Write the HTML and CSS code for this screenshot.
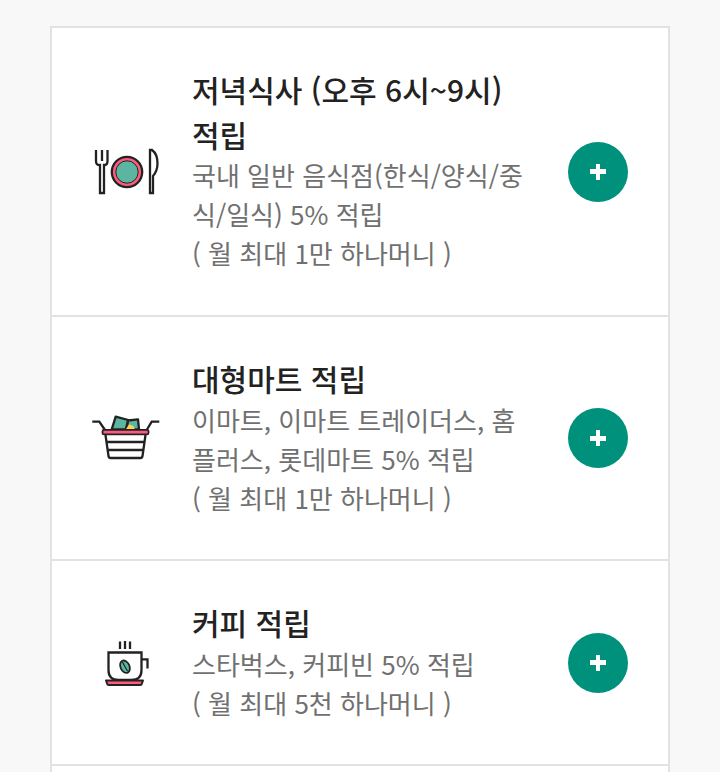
FILE: index.html
```html
<!DOCTYPE html>
<html lang="ko">
<head>
<meta charset="utf-8">
<title>적립</title>
<link rel="stylesheet" href="styles.css">
</head>
<body>
<ul class="card">
  <li class="row">
    <svg class="icon" viewBox="0 0 80 60" width="80" height="60">
      <g fill="none" stroke="#222" stroke-width="2.3">
        <path d="M9 8V19Q9 23 12 23H13V51H17V23H18Q20.5 23 20.5 19V8M15 8V19"/>
        <circle cx="40" cy="30" r="15.2" fill="#ff5a7d"/>
        <circle cx="40" cy="30" r="11.2" fill="#5cb5a0" stroke="#222" stroke-width="1"/>
        <path d="M63 8V51H66V34Q70.5 29 70.5 21Q70.5 12 65 8Z"/>
      </g>
    </svg>
    <div class="body">
      <h3 class="title">저녁식사 (오후 6시~9시) 적립</h3>
      <p class="desc">국내 일반 음식점(한식/양식/중식/일식) 5% 적립<br>( 월 최대 1만 하나머니 )</p>
    </div>
    <button class="add" type="button" aria-label="추가"><span class="plus"></span></button>
  </li>
  <li class="row">
    <svg class="icon" viewBox="0 0 80 60" width="80" height="60">
      <path d="M24.7 21.3L28.7 8.7L41.3 12L38.7 21.3Z" fill="#5cb5a0" stroke="#222" stroke-width="2.3" stroke-linejoin="round"/>
      <path d="M41 12.5L51 11.3L52 21.3H40Z" fill="#5cb5a0" stroke="#222" stroke-width="2.3" stroke-linejoin="round"/>
      <path d="M39 21.3L42 16.3L46.3 18L48 21.3Z" fill="#ffd54f"/>
      <g fill="none" stroke="#222" stroke-width="2.3">
        <path d="M5.3 13.7H12.3L18 22M72.3 13.7H64.7L59.7 22"/>
        <path d="M18.5 27L21.5 48Q21.8 50 23.5 50H53.5Q55.2 50 55.5 48L58.5 27"/>
        <path d="M19 34H58M20.5 42H56.5"/>
      </g>
      <rect x="15.5" y="21.8" width="46" height="4.6" rx="1.5" fill="#ff5a7d" stroke="#222" stroke-width="1.8"/>
    </svg>
    <div class="body">
      <h3 class="title">대형마트 적립</h3>
      <p class="desc">이마트, 이마트 트레이더스, 홈플러스, 롯데마트 5% 적립<br>( 월 최대 1만 하나머니 )</p>
    </div>
    <button class="add" type="button" aria-label="추가"><span class="plus"></span></button>
  </li>
  <li class="row">
    <svg class="icon" viewBox="0 0 80 60" width="80" height="60">
      <g fill="none" stroke="#222" stroke-width="2.3">
        <path d="M33 8.5V16M38 8V16M43 8.5V16"/>
        <path d="M21.5 19.5H54.5V37Q54.5 47 44.5 47H31.5Q21.5 47 21.5 37Z" fill="#fff"/>
        <path d="M54.5 26.3H60.5V35.5"/>
      </g>
      <path d="M19 47.5H56L54.5 51.5Q54 52 53 52H22Q21 52 20.5 51.5Z" fill="#ff5a7d" stroke="#222" stroke-width="2" stroke-linejoin="round"/>
      <ellipse cx="38" cy="33.7" rx="4.5" ry="6.5" transform="rotate(-25 38 33.7)" fill="#5cb5a0" stroke="#222" stroke-width="1.8"/>
      <path d="M35.5 29Q38 34 40.5 38" fill="none" stroke="#222" stroke-width="1.2"/>
    </svg>
    <div class="body">
      <h3 class="title">커피 적립</h3>
      <p class="desc">스타벅스, 커피빈 5% 적립<br>( 월 최대 5천 하나머니 )</p>
    </div>
    <button class="add" type="button" aria-label="추가"><span class="plus"></span></button>
  </li>
  <li class="row-next"></li>
</ul>
</body>
</html>
```
FILE: styles.css
```css
html, body {
  margin: 0;
  padding: 0;
  height: 772px;
  overflow: hidden;
  background: #f8f8f8;
}
body {
  padding: 26px 50px 0;
  font-family: "Noto Sans CJK KR", "Noto Sans", sans-serif;
}
.card {
  list-style: none;
  margin: 0;
  padding: 0;
  background: #fff;
  border: 2px solid #e2e2e2;
  border-bottom: 0;
}
.row {
  display: flex;
  align-items: center;
  padding: 39px 40px 41.5px 35px;
  border-bottom: 2px solid #e2e2e2;
}
.row:first-child {
  padding-bottom: 42px;
}
.row-next {
  height: 40px;
}
.icon {
  flex: none;
  margin: 3px 25px 0 0;
}
.body {
  flex: 1;
  min-width: 0;
  padding-right: 30px;
}
.title {
  margin: 0;
  font-size: 30px;
  line-height: 44.5px;
  font-weight: 500;
  color: #222;
}
.desc {
  margin: -1px 0 1px;
  font-size: 26px;
  line-height: 39px;
  font-weight: 400;
  color: #707070;
}
.add {
  flex: none;
  position: relative;
  width: 60px;
  height: 60px;
  margin-top: 3px;
  padding: 0;
  border: 0;
  border-radius: 50%;
  background: #00917c;
}
.plus {
  position: absolute;
  left: 22px;
  top: 22px;
  width: 16px;
  height: 16px;
  background:
    linear-gradient(#fff, #fff) center / 16px 5px no-repeat,
    linear-gradient(#fff, #fff) center / 4px 16px no-repeat;
}
```
